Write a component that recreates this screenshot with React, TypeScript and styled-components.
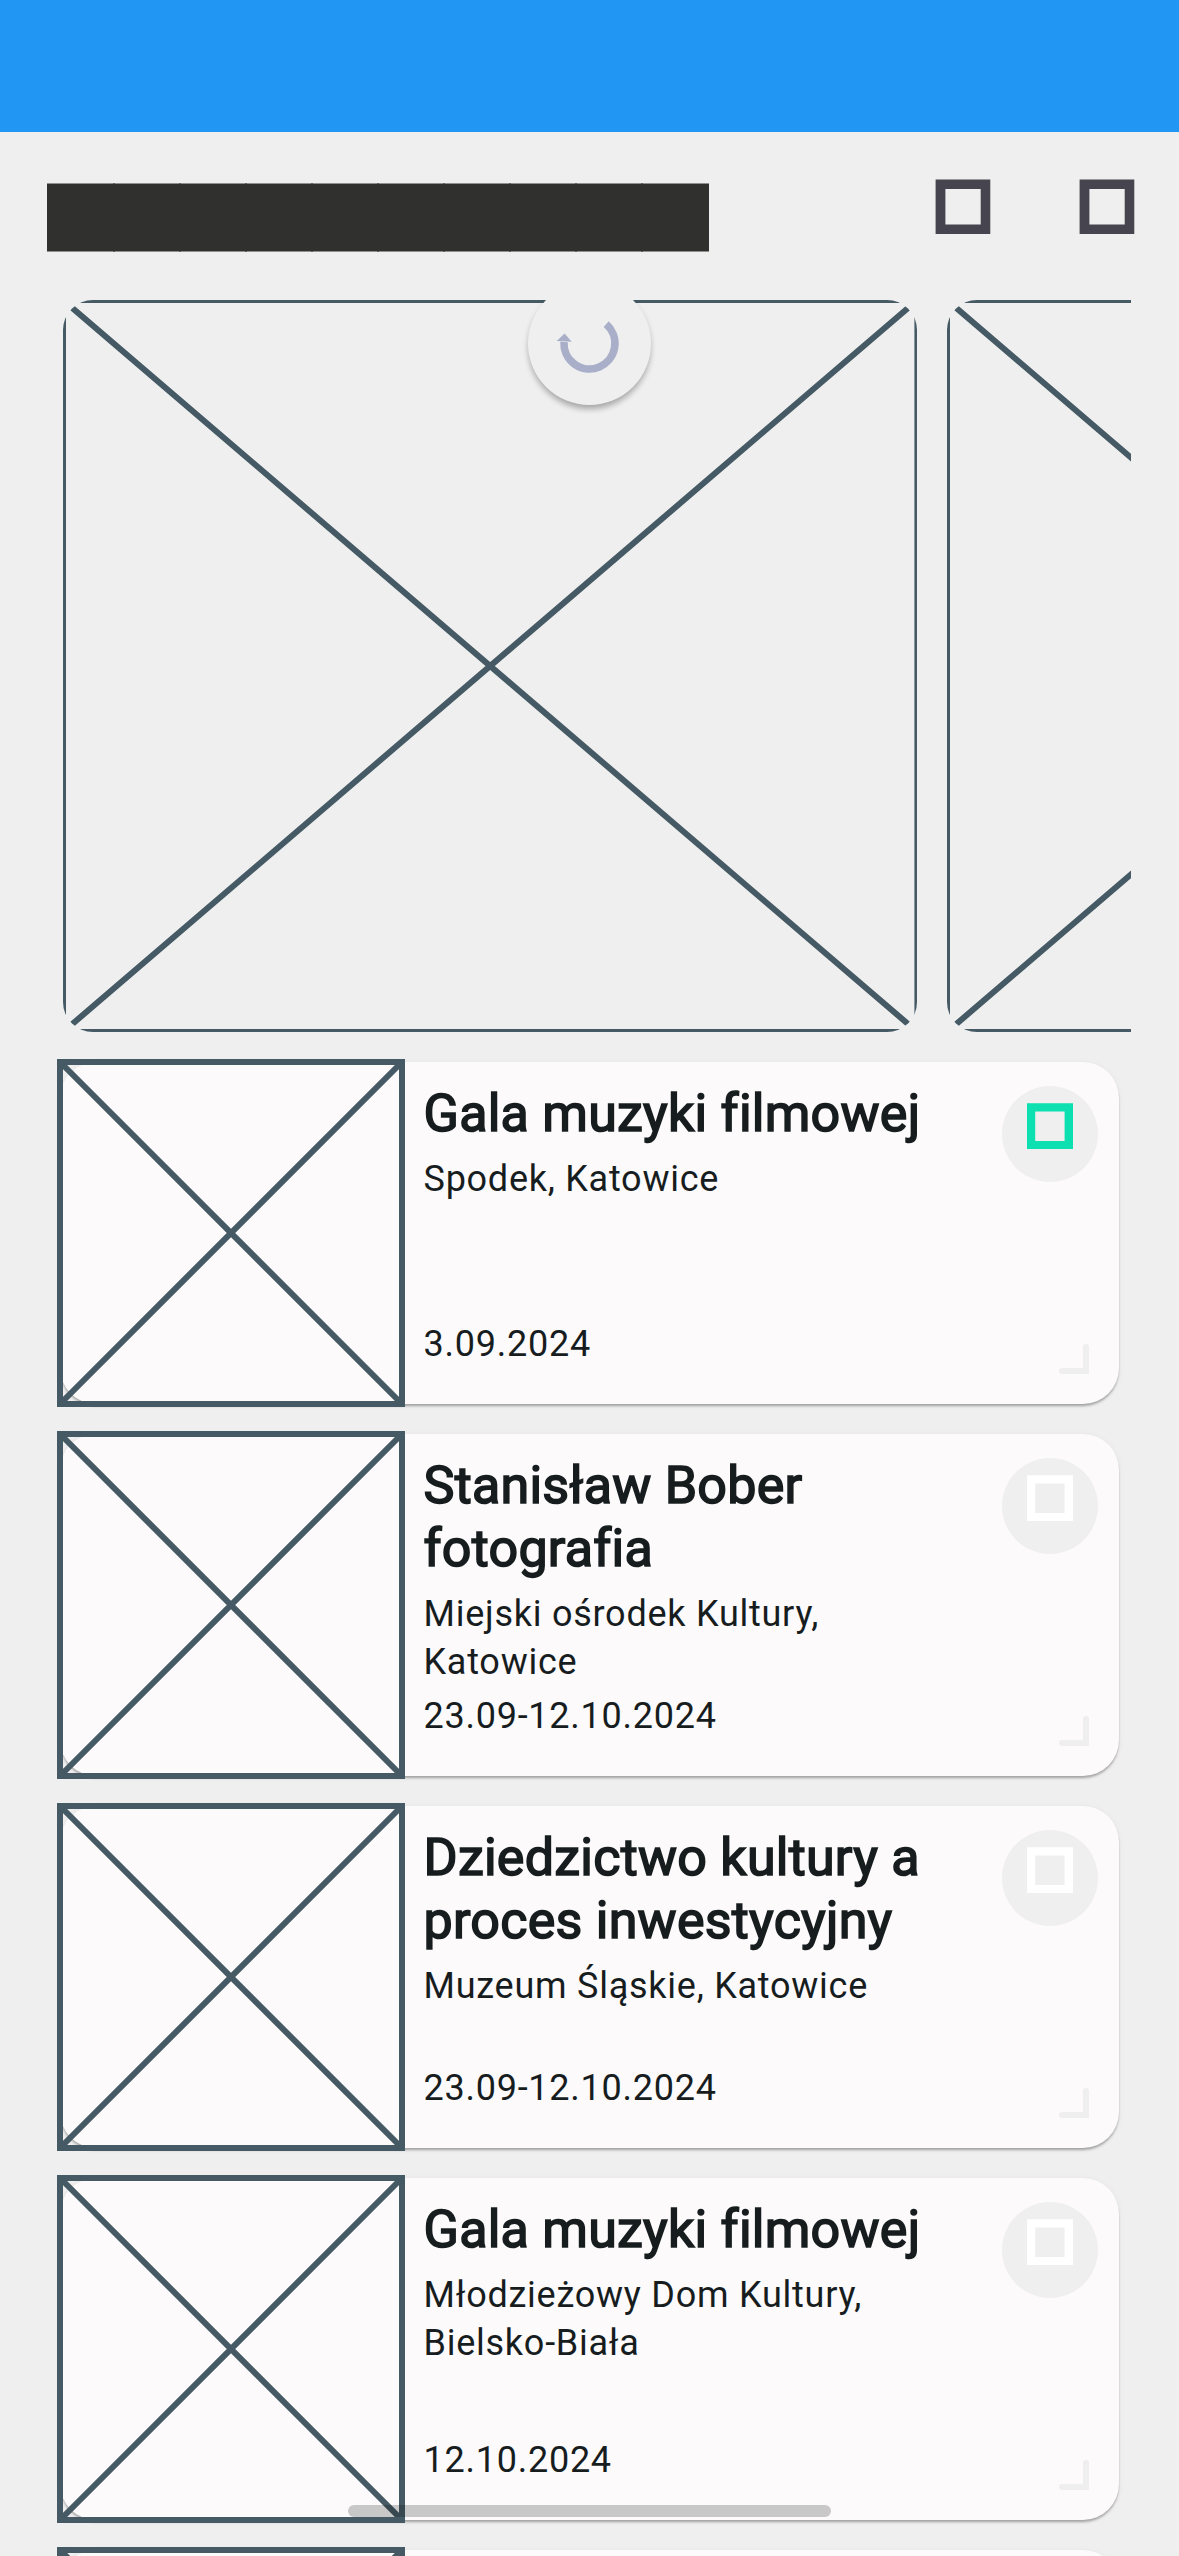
import React from "react";
import styled, { createGlobalStyle } from "styled-components";

const colors = {
  page: "#efefef",
  card: "#fcfafb",
  ink: "#171d1e",
  frame: "#455a64",
  status: "#2196f3",
  accent: "#0de0b0",
  headerIcon: "#46454f",
  spinner: "#a9aec9",
};

const GlobalStyle = createGlobalStyle`
  *, *::before, *::after { box-sizing: border-box; }
  html, body { margin: 0; background: ${colors.page}; }
  body { font-family: Roboto, "Noto Sans", sans-serif; color: ${colors.ink}; }
  h2, p { margin: 0; }
  svg { display: block; }
`;

const Screen = styled.main`
  position: relative;
  display: flex;
  flex-direction: column;
  width: 1179px;
  height: 2556px;
  overflow: hidden;
  background: ${colors.page};
`;

const StatusBar = styled.div`
  flex: none;
  height: 132px;
  background: ${colors.status};
`;

const Header = styled.header`
  flex: none;
  display: flex;
  justify-content: space-between;
  align-items: flex-start;
  height: 168px;
  padding: 47px 44px 0 47px;
`;

const TitleBlocks = styled.div`
  display: flex;
  padding-top: 4px;
`;

const TitleBlock = styled.span`
  width: 68px;
  height: 69px;
  margin-right: -2px;
  background: #30302e;
  background-clip: padding-box;
  border: solid rgba(48, 48, 46, 0.5);
  border-width: 1px 0;
`;

const HeaderActions = styled.div`
  display: flex;
  gap: 88px;
`;

const Carousel = styled.section`
  flex: none;
  display: flex;
  gap: 30px;
  margin: 0 48px;
  padding-left: 15px;
  overflow: hidden;
`;

const HeroFrame = styled.div`
  flex: none;
  width: 854.4px;
  height: 732px;
  border-radius: 30px;
  overflow: hidden;
`;

const EventList = styled.section`
  flex: none;
  display: flex;
  flex-direction: column;
  gap: 30px;
  padding: 30px 60px 0;
`;

const Card = styled.article`
  display: flex;
  height: 342px;
  border-radius: 36px;
  background: ${colors.card};
  box-shadow: 0 3px 3px -1px rgba(0, 0, 0, 0.2), 0 2px 2px rgba(0, 0, 0, 0.12),
    0 1px 6px rgba(0, 0, 0, 0.05);
`;

const Thumb = styled.div`
  flex: none;
  width: 342px;
  svg { overflow: visible; }
`;

const Details = styled.div`
  width: 546px;
  padding: 20px 0 36px 21.5px;
  display: flex;
  flex-direction: column;
`;

const EventTitle = styled.h2`
  font-size: 52px;
  font-weight: 400;
  line-height: 63px;
  letter-spacing: 0.25px;
  -webkit-text-stroke: 1.6px ${colors.ink};
`;

const Meta = styled.p<{ $bottom?: boolean }>`
  margin-top: ${(p) => (p.$bottom ? "auto" : "10px")};
  font-size: 36px;
  line-height: 48px;
  letter-spacing: 0.75px;
`;

const Actions = styled.div`
  display: flex;
  flex-direction: column;
  justify-content: space-between;
  align-items: flex-end;
  margin-left: auto;
  padding: 24px 21px 30px 0;
`;

const FavoriteButton = styled.button`
  display: flex;
  justify-content: center;
  align-items: flex-start;
  width: 96px;
  height: 96px;
  padding: 17px 0 0;
  border: 0;
  border-radius: 50%;
  background: ${colors.page};
`;

const CornerMark = styled.svg`
  margin-right: 9px;
`;

const RefreshBadge = styled.div`
  position: absolute;
  left: 528px;
  top: 282px;
  width: 123px;
  height: 123px;
  border-radius: 50%;
  background: ${colors.page};
  box-shadow: 0 6px 6px -2px rgba(0, 0, 0, 0.2), 0 3px 6px rgba(0, 0, 0, 0.15);
  clip-path: inset(18px -20px -20px -20px);
`;

const HomeIndicator = styled.div`
  position: absolute;
  left: 348px;
  top: 2505px;
  width: 483px;
  height: 12px;
  border-radius: 6px;
  background: rgba(0, 0, 0, 0.2);
`;

function Crossed({ width, height }: { width: number; height: number }) {
  return (
    <svg width={width} height={height} fill="none" stroke={colors.frame} strokeWidth="6">
      <rect width={width} height={height} />
      <path d={`M0 0 L${width} ${height} M${width} 0 L0 ${height}`} />
    </svg>
  );
}

function HeaderIcon() {
  return (
    <svg width="56" height="56" viewBox="0 0 56 56">
      <path
        fill={colors.headerIcon}
        fillRule="evenodd"
        d="M.6.5H55.3V55H.6Z M10.4 10V45.5H45.7V10Z"
      />
    </svg>
  );
}

function FavoriteIcon({ active }: { active?: boolean }) {
  return (
    <svg width="46" height="46" viewBox="0 0 46 46">
      <path
        fill={active ? colors.accent : "#ffffff"}
        fillRule="evenodd"
        d="M0 .2H46V46H0Z M8.2 8.4V38H37.6V8.4Z"
      />
    </svg>
  );
}

interface EventItem {
  title: string;
  place: string;
  date: string;
  active?: boolean;
}

const events: EventItem[] = [
  { title: "Gala muzyki filmowej", place: "Spodek, Katowice", date: "3.09.2024", active: true },
  { title: "Stanisław Bober fotografia", place: "Miejski ośrodek Kultury, Katowice", date: "23.09-12.10.2024" },
  { title: "Dziedzictwo kultury a proces inwestycyjny", place: "Muzeum Śląskie, Katowice", date: "23.09-12.10.2024" },
  { title: "Gala muzyki filmowej", place: "Młodzieżowy Dom Kultury, Bielsko-Biała", date: "12.10.2024" },
];

function EventCard({ event }: { event?: EventItem }) {
  return (
    <Card>
      <Thumb>
        <Crossed width={342} height={342} />
      </Thumb>
      {event && (
        <>
          <Details>
            <EventTitle>{event.title}</EventTitle>
            <Meta>{event.place}</Meta>
            <Meta $bottom>{event.date}</Meta>
          </Details>
          <Actions>
            <FavoriteButton>
              <FavoriteIcon active={event.active} />
            </FavoriteButton>
            <CornerMark width="30" height="30" fill="none" stroke={colors.page} strokeWidth="6">
              <path d="M3 27H27V3" strokeLinecap="round" />
              <path d="M24 27H30" />
            </CornerMark>
          </Actions>
        </>
      )}
    </Card>
  );
}

export default function App() {
  return (
    <>
      <GlobalStyle />
      <Screen>
        <StatusBar />
        <Header>
          <TitleBlocks>
            {Array.from({ length: 10 }, (_, i) => (
              <TitleBlock key={i} />
            ))}
          </TitleBlocks>
          <HeaderActions>
            <HeaderIcon />
            <HeaderIcon />
          </HeaderActions>
        </Header>
        <Carousel>
          <HeroFrame>
            <Crossed width={854.4} height={732} />
          </HeroFrame>
          <HeroFrame>
            <Crossed width={854.4} height={732} />
          </HeroFrame>
        </Carousel>
        <EventList>
          {events.map((event, i) => (
            <EventCard key={i} event={event} />
          ))}
          <EventCard />
        </EventList>
        <RefreshBadge>
          <svg width="123" height="123" viewBox="0 0 123 123">
            <path
              d="M78.2 42.2A25.5 25.5 0 1 1 36 60"
              fill="none"
              stroke={colors.spinner}
              strokeWidth="7.6"
            />
            <path d="M28.7 59 L36.6 51.5 L43.7 59.8Z" fill={colors.spinner} />
          </svg>
        </RefreshBadge>
        <HomeIndicator />
      </Screen>
    </>
  );
}
